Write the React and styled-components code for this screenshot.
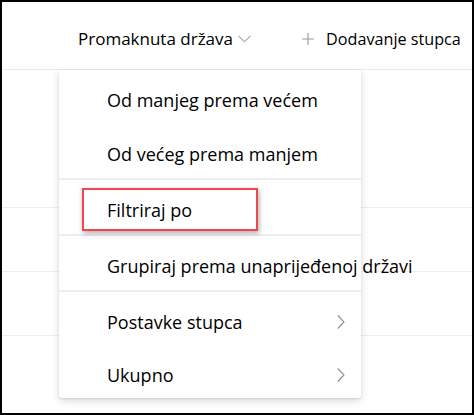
import React from 'react';
import styled, { createGlobalStyle } from 'styled-components';

const GlobalStyle = createGlobalStyle`
  html, body {
    margin: 0;
    padding: 0;
    background: #ffffff;
  }
  body {
    font-family: 'Open Sans', 'Noto Sans', 'Liberation Sans', sans-serif;
    color: #000000;
  }
`;

const Frame = styled.div`
  position: relative;
  width: 474px;
  height: 415px;
  box-sizing: border-box;
  border: 2px solid #000000;
  background: #ffffff;
  overflow: hidden;
`;

const Header = styled.div`
  height: 68px;
  box-sizing: border-box;
  border-bottom: 1px solid #ebebeb;
  display: flex;
  align-items: center;
  padding: 6px 0 0 76px;
`;

const ColumnTitle = styled.div`
  display: flex;
  align-items: center;
  gap: 5px;
  font-size: 17px;
  color: #000000;
`;

const AddColumn = styled.div`
  display: flex;
  align-items: center;
  gap: 12px;
  margin-left: 51px;
  font-size: 16.2px;
  color: #000000;
`;

const Spacer = styled.div`
  height: 137px;
  border-bottom: 1px solid #eeeeee;
`;

const Row = styled.div`
  height: 63px;
  border-bottom: 1px solid #eeeeee;
`;

const Menu = styled.div`
  position: absolute;
  left: 57px;
  top: 68px;
  width: 302px;
  background: #ffffff;
  border-radius: 0 0 3px 3px;
  box-shadow: 0 3px 8px rgba(0, 0, 0, 0.14), 0 1px 2px rgba(0, 0, 0, 0.1);
`;

const Group = styled.div`
  & + & {
    border-top: 2px solid #ededed;
  }
`;

const Item = styled.div`
  position: relative;
  height: ${p => (p.$short ? 53 : 54)}px;
  box-sizing: border-box;
  padding: 6px 16px 0 48px;
  display: flex;
  align-items: center;
  justify-content: space-between;
  font-size: 18px;
  color: #000000;
  white-space: nowrap;
`;

const Label = styled.span``;

const Highlight = styled.div`
  position: absolute;
  left: 23px;
  top: 8px;
  width: 176px;
  height: 43px;
  box-sizing: border-box;
  border: 2.5px solid #ee474e;
  box-shadow: 1px 2px 5px rgba(0, 0, 0, 0.35);
  pointer-events: none;
`;

const ChevronDown = () => (
  <svg width="13" height="8" viewBox="0 0 13 8" fill="none">
    <path d="M0.5 0.8 L6.5 6.8 L12.5 0.8" stroke="#a6a6a6" strokeWidth="1.1" />
  </svg>
);

const ChevronRight = () => (
  <svg width="8" height="14" viewBox="0 0 8 14" fill="none">
    <path d="M0.8 0.5 L7 7 L0.8 13.5" stroke="#8f8f8f" strokeWidth="1.1" />
  </svg>
);

const Plus = () => (
  <svg width="12" height="12" viewBox="0 0 12 12" fill="none">
    <path d="M6 0 V12 M0 6 H12" stroke="#9a9a9a" strokeWidth="1.1" />
  </svg>
);

const groups = [
  [{ label: 'Od manjeg prema većem' }, { label: 'Od većeg prema manjem' }],
  [{ label: 'Filtriraj po', highlight: true }],
  [{ label: 'Grupiraj prema unaprijeđenoj državi' }],
  [
    { label: 'Postavke stupca', sub: true, short: true },
    { label: 'Ukupno', sub: true, short: true }
  ]
];

export default function App() {
  return (
    <>
      <GlobalStyle />
      <Frame>
        <Header>
          <ColumnTitle>
            Promaknuta država
            <ChevronDown />
          </ColumnTitle>
          <AddColumn>
            <Plus />
            Dodavanje stupca
          </AddColumn>
        </Header>
        <Spacer />
        <Row />
        <Row />
        <Menu>
          {groups.map((items, gi) => (
            <Group key={gi}>
              {items.map(item => (
                <Item key={item.label} $short={item.short}>
                  <Label>{item.label}</Label>
                  {item.sub && <ChevronRight />}
                  {item.highlight && <Highlight />}
                </Item>
              ))}
            </Group>
          ))}
        </Menu>
      </Frame>
    </>
  );
}
